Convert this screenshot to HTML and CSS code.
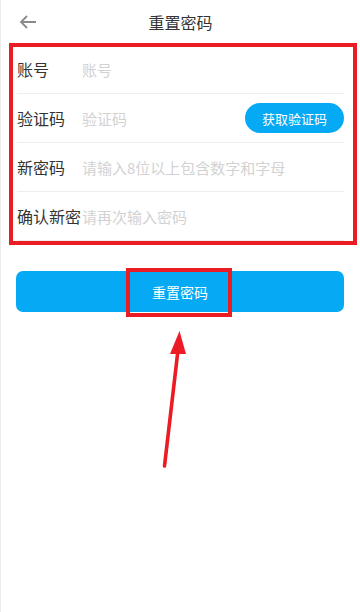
FILE: index.html
```html
<!DOCTYPE html>
<html lang="zh-CN">
<head>
  <meta charset="UTF-8">
  <meta name="viewport" content="width=device-width, initial-scale=1.0">
  <title>重置密码</title>
  <link rel="stylesheet" href="styles.css">
</head>
<body>
  <div class="page">
    <header class="topbar">
      <svg class="back" width="18" height="14" viewBox="0 0 18 14">
        <path d="M17 7H2M8 1L2 7l6 6" fill="none" stroke="#8a8a8a" stroke-width="1.8"/>
      </svg>
      <h1 class="title">重置密码</h1>
    </header>

    <form class="form">
      <div class="field">
        <span class="label">账号</span>
        <input type="text" placeholder="账号">
      </div>
      <div class="field">
        <span class="label">验证码</span>
        <input type="text" placeholder="验证码">
        <button type="button" class="code-btn">获取验证码</button>
      </div>
      <div class="field">
        <span class="label">新密码</span>
        <input type="password" placeholder="请输入8位以上包含数字和字母">
      </div>
      <div class="field">
        <span class="label">确认新密</span>
        <input type="password" placeholder="请再次输入密码">
      </div>
      <div class="mark mark-form"></div>
    </form>

    <button type="button" class="submit">
      重置密码
      <span class="mark mark-btn"></span>
    </button>

    <svg class="pointer" width="40" height="150" viewBox="150 325 40 150">
      <path d="M178 350L164.5 466" stroke="#ec1c24" stroke-width="3.6" stroke-linecap="round"/>
      <polygon points="179.5,331 170,354 186,354" fill="#ec1c24"/>
    </svg>
  </div>
</body>
</html>
```

FILE: styles.css
```css
body {
  margin: 0;
  background: #fff;
  font-family: "Noto Sans CJK SC", "Noto Sans", sans-serif;
  color: #333;
}
.page {
  position: relative;
  height: 612px;
  border-left: 1px solid #ececec;
  box-sizing: border-box;
  overflow: hidden;
}
.topbar {
  position: relative;
  height: 45px;
  display: flex;
  align-items: center;
  justify-content: center;
}
.back {
  position: absolute;
  left: 18px;
  top: 15px;
}
.title {
  margin: 0;
  font-size: 16px;
  font-weight: normal;
  color: #333;
  line-height: 1;
  margin-top: -2px;
}
.form {
  position: relative;
  margin: 0 16px;
}
.field {
  display: flex;
  align-items: center;
  height: 48px;
  border-bottom: 1px solid #eeeeee;
}
.label {
  flex: 0 0 65px;
  width: 65px;
  white-space: nowrap;
  font-size: 16px;
  color: #333;
}
.field input {
  flex: 1;
  min-width: 0;
  border: 0;
  outline: none;
  padding: 0;
  font-family: inherit;
  font-size: 15px;
  color: #333;
  background: transparent;
}
.field input::placeholder {
  color: #d2d2d2;
}
.code-btn {
  flex: 0 0 99px;
  height: 30px;
  border: 0;
  border-radius: 15px;
  background: #05a9f4;
  color: #fff;
  font-family: inherit;
  font-size: 13px;
  padding: 0;
}
.submit {
  position: relative;
  display: block;
  width: calc(100% - 31px);
  height: 41px;
  margin: 30px 0 0 15px;
  border: 0;
  border-radius: 7px;
  background: #05a9f4;
  color: #fff;
  font-family: inherit;
  font-size: 14px;
}
.mark {
  position: absolute;
  border: 4px solid #ec1c24;
  box-sizing: border-box;
  pointer-events: none;
}
.mark-form {
  top: -2px;
  left: -8px;
  right: -13px;
  bottom: -4px;
}
.mark-btn {
  top: -3px;
  left: 110px;
  width: 106px;
  height: 49px;
}
.pointer {
  position: absolute;
  left: 149px;
  top: 325px;
}
```
